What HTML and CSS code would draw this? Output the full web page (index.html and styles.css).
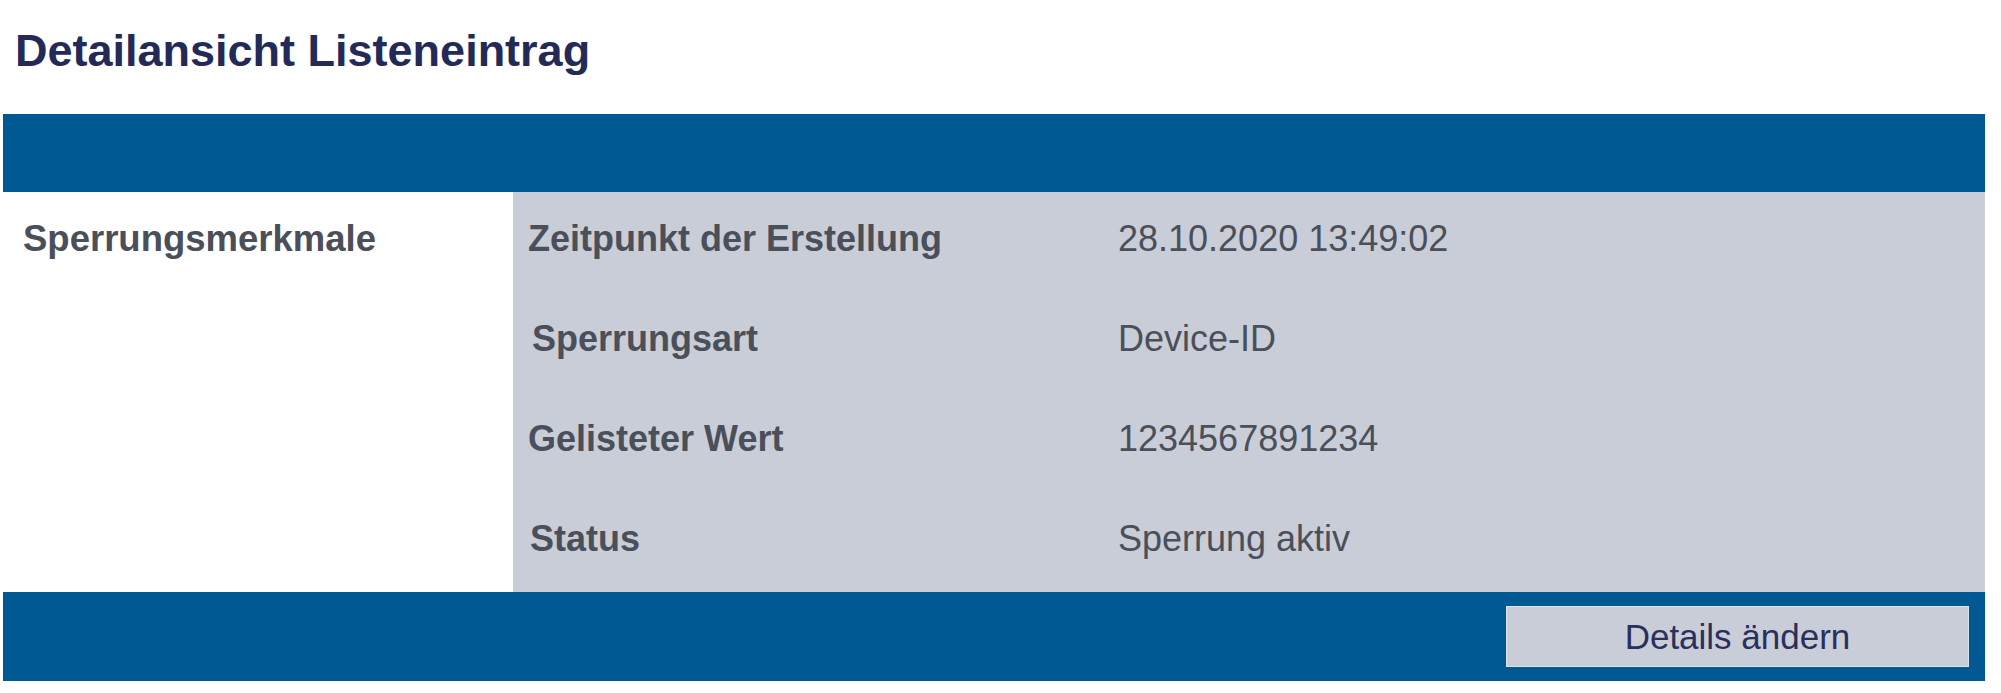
FILE: index.html
```html
<!DOCTYPE html>
<html lang="de">
  <head>
    <meta charset="UTF-8" />
    <meta name="viewport" content="width=device-width, initial-scale=1.0" />
    <title>Detailansicht Listeneintrag</title>
    <link rel="stylesheet" href="styles.css">
  </head>
  <body>
    <div class="page">
      <h1 class="title">Detailansicht Listeneintrag</h1>

      <div class="panel">
        <div class="bar bar-top"></div>

        <div class="panel-body">
          <div class="group-name">Sperrungsmerkmale</div>
          <dl class="fields">
            <dt>Zeitpunkt der Erstellung</dt>
            <dd>28.10.2020 13:49:02</dd>
            <dt class="nudge">Sperrungsart</dt>
            <dd>Device-ID</dd>
            <dt>Gelisteter Wert</dt>
            <dd>1234567891234</dd>
            <dt class="nudge-small">Status</dt>
            <dd>Sperrung aktiv</dd>
          </dl>
        </div>

        <div class="bar bar-bottom">
          <button class="btn">Details ändern</button>
        </div>
      </div>
    </div>
  </body>
</html>
```

FILE: styles.css
```css
/* General page */
body {
  margin: 0;
  font-family: "Liberation Sans", Arial, sans-serif;
  background-color: #ffffff;
  color: #4b4f59;
}

.page {
  width: 1982px;
  margin-left: 3px;
  padding-top: 25px;
}

.title {
  margin: 0 0 37px 12px;
  font-size: 45px;
  line-height: 52px;
  font-weight: bold;
  color: #232a58;
}

/* Panel */
.bar {
  background-color: #015994;
}

.bar-top {
  height: 78px;
}

.panel-body {
  display: flex;
}

.group-name {
  width: 490px;
  padding: 27px 0 0 20px;
  font-size: 36.5px;
  line-height: 40px;
  font-weight: bold;
}

.fields {
  flex: 1;
  margin: 0;
  display: grid;
  grid-template-columns: 590px 1fr;
  grid-auto-rows: 100px;
  padding-left: 15px;
  background-color: #c8cdd8;
  font-size: 36px;
  line-height: 40px;
}

.fields dt,
.fields dd {
  margin: 0;
  padding-top: 27px;
}

.fields dt {
  font-weight: bold;
}

.fields .nudge {
  padding-left: 4px;
}

.fields .nudge-small {
  padding-left: 2px;
}

/* Footer bar with button */
.bar-bottom {
  height: 89px;
  display: flex;
  justify-content: flex-end;
  align-items: center;
  padding-right: 16px;
}

.btn {
  width: 463px;
  height: 61px;
  padding: 0;
  font-family: "Liberation Sans", Arial, sans-serif;
  font-size: 35px;
  color: #2a2f5c;
  background-color: #c8cdd8;
  border: 1px solid #dfe3ea;
  cursor: pointer;
}

.btn:hover {
  background-color: #d5d9e2;
}
```
